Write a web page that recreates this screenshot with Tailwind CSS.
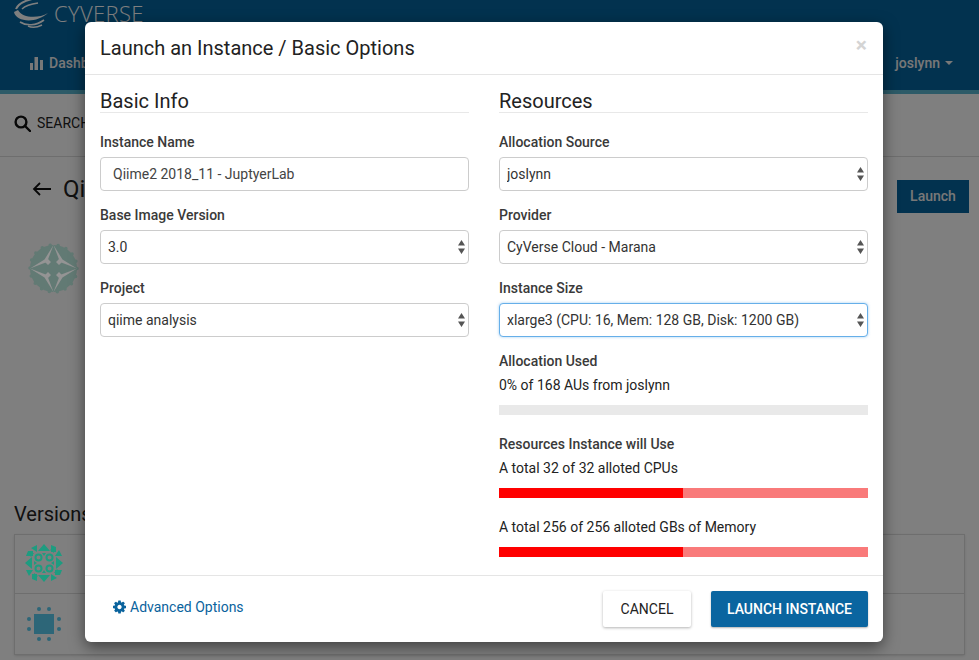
<!DOCTYPE html>
<html lang="en">
<head>
  <meta charset="UTF-8">
  <title>Launch an Instance</title>
  <script src="https://cdn.jsdelivr.net/npm/@tailwindcss/browser@4"></script>
</head>
<body class="relative h-[660px] w-[979px] overflow-hidden bg-white font-['Roboto',sans-serif] text-[14px] text-[#222]">
  <!-- Page behind the modal -->
  <header class="h-[94px] border-b-4 border-[#5bb6d0] bg-[#04649e]">
    <div class="flex h-[29px] items-start pl-[14px]">
      <svg class="h-[29px] w-[34px]" viewBox="0 0 34 29" fill="none" stroke="#fff">
        <path d="M0 12C2 22 22 24 34 13C24 19 8 18 4 10Z" fill="#fff" stroke="none"/>
        <path d="M2 9C4 4 10 1 18 -1" stroke-width="2"/>
        <path d="M8 9C11 6 16 4 24 3" stroke-width="1.500"/>
        <path d="M6 22C12 26 22 26 30 20" stroke-width="1.600"/>
        <path d="M14 26C18 28 24 27 28 25" stroke-width="1.400"/>
      </svg>
      <span class="ml-[6px] mt-[1px] font-['Open_Sans',sans-serif] text-[22px] font-light leading-[24px] tracking-[0.35px] text-white">CYVERSE</span>
    </div>
    <div class="flex h-[61px] items-center justify-between pl-[30px] pr-[26px] pt-[7px] font-medium text-[#f0f0f0]">
      <div class="flex items-center gap-[5px]">
        <svg class="h-[14px] w-[14px]" viewBox="0 0 14 14" fill="currentColor"><rect x="0" y="7" width="3" height="7"/><rect x="4.500" y="1" width="3.500" height="13"/><rect x="10" y="4" width="3" height="10"/></svg>
        <span>Dashboard</span>
      </div>
      <div class="flex items-center gap-[5px]">
        <span>joslynn</span>
        <span class="h-0 w-0 border-x-4 border-t-4 border-x-transparent border-t-[#f0f0f0]"></span>
      </div>
    </div>
  </header>

  <div class="flex h-[63px] items-center gap-[6px] border-b border-[#ddd] pb-[3px] pl-[14px]">
    <svg class="h-[17px] w-[17px]" viewBox="0 0 17 17" fill="none" stroke="#111" stroke-width="2.400"><circle cx="7" cy="7" r="5.400"/><path d="M11 11L16 16" stroke-linecap="round"/></svg>
    <span>SEARCH</span>
  </div>

  <div class="flex h-[57px] items-start justify-between pl-[32px] pr-[10px]">
    <div class="mt-[17px] flex items-center gap-[12px]">
      <svg class="h-[14px] w-[19px]" viewBox="0 0 19 14" fill="none" stroke="#111" stroke-width="1.800"><path d="M19 7H2M8 1L2 7L8 13"/></svg>
      <span class="text-[24px] leading-[30px]">Qiime2</span>
    </div>
    <button class="mt-[23px] flex h-[33px] w-[72px] items-center justify-center bg-[#04649e] font-medium text-[#f0f0f0]">Launch</button>
  </div>

  <div class="ml-[28px] mt-[29px] h-[51px] w-[51px]">
    <svg class="relative z-10 h-[51px] w-[51px]" viewBox="0 0 51 51">
      <circle cx="25.500" cy="25.500" r="23.500" fill="#627a74"/>
      <circle cx="25.500" cy="25.500" r="23.500" fill="none" stroke="#627a74" stroke-width="3.500" stroke-linecap="round" stroke-dasharray="0 8.200"/>
      <g fill="#949494">
        <path d="M25.500 2L19 19L2 25.500L16.500 16.500Z"/>
        <path d="M25.500 2L32 19L49 25.500L34.500 16.500Z"/>
        <path d="M25.500 49L19 32L2 25.500L16.500 34.500Z"/>
        <path d="M25.500 49L32 32L49 25.500L34.500 34.500Z"/>
        <path d="M20 16L23 19L20 22L17 19ZM31 16L34 19L31 22L28 19ZM20 29L23 32L20 35L17 32ZM31 29L34 32L31 35L28 32Z"/>
      </g>
    </svg>
  </div>

  <div class="ml-[14px] mt-[208px] text-[20px] leading-[24px]">Versions</div>
  <div class="mx-[14px] mt-[8px] border border-[#ddd] shadow">
    <div class="flex h-[59px] items-center border-b border-[#ddd] pb-[3px] pl-[9px]">
      <svg class="relative z-10 h-[40px] w-[40px]" viewBox="0 0 40 40" fill="#1e9c80">
        <defs>
          <g id="quarter">
            <path d="M20 1L26 8H14Z"/>
            <path d="M7 5L13 2V9Z"/>
            <path d="M27 2L32 4V9H27Z"/>
            <path d="M18 10H22L20 13Z"/>
            <path d="M4 10L10 10L7 14Z"/>
            <circle cx="14.500" cy="14.500" r="3" fill="none" stroke="#1e9c80" stroke-width="2"/>
          </g>
        </defs>
        <use href="#quarter"/>
        <use href="#quarter" transform="rotate(90 20 20)"/>
        <use href="#quarter" transform="rotate(180 20 20)"/>
        <use href="#quarter" transform="rotate(270 20 20)"/>
      </svg>
    </div>
    <div class="flex h-[60px] items-center pl-[9px]">
      <svg class="relative z-10 h-[40px] w-[40px]" viewBox="0 0 40 40" fill="#2d6678">
        <rect x="10" y="10" width="20" height="20"/>
        <circle cx="15" cy="5" r="2"/><circle cx="25" cy="5" r="2"/><circle cx="15" cy="35" r="2"/><circle cx="25" cy="35" r="2"/><circle cx="5" cy="15" r="2"/><circle cx="5" cy="25" r="2"/><circle cx="35" cy="15" r="2"/><circle cx="35" cy="25" r="2"/>
      </svg>
    </div>
  </div>

  <!-- Modal -->
  <div class="absolute inset-0 bg-black/50">
    <div class="relative z-20 ml-[85px] mt-[22px] flex h-[620px] w-[798px] flex-col rounded-[6px] bg-white shadow-[0_5px_15px_rgba(0,0,0,0.5)]">
      <div class="flex h-[53px] items-center justify-between border-b border-[#e5e5e5] pl-[15px] pr-[16px]">
        <h4 class="text-[20px] leading-[22px]">Launch an Instance / Basic Options</h4>
        <span class="mb-[6px] text-[21px] font-bold leading-none text-[#d4d4d4]">×</span>
      </div>

      <div class="flex flex-1 gap-[30px] pl-[15px] pr-[15px] pt-[15px]">
        <section class="w-[369px]">
          <h3 class="mb-[19px] h-[23px] border-b border-[#e8e8e8] text-[20px] leading-[22px]">Basic Info</h3>
          <label class="mb-[5px] block font-medium leading-[20px] text-[#3a3a3a]">Instance Name</label>
          <input class="mb-[14px] block h-[34px] w-full rounded-[4px] border border-[#ccc] px-[12px] text-[14px] text-[#444]" value="Qiime2 2018_11 - JuptyerLab">

          <label class="mb-[5px] block font-medium leading-[20px] text-[#3a3a3a]">Base Image Version</label>
          <div class="relative mb-[14px]">
            <select class="block h-[34px] w-full appearance-none rounded-[4px] border border-[#ccc] bg-white pl-[7px] text-[14px] text-[#333]"><option>3.0</option></select>
            <svg class="absolute right-[3px] top-[9px] h-[16px] w-[9px]" viewBox="0 0 9 16" fill="#555"><path d="M4.500 1L8 6.500H1ZM4.500 15L1 9.500H8Z"/></svg>
          </div>

          <label class="mb-[5px] block font-medium leading-[20px] text-[#3a3a3a]">Project</label>
          <div class="relative">
            <select class="block h-[34px] w-full appearance-none rounded-[4px] border border-[#ccc] bg-white pl-[7px] text-[14px] text-[#333]"><option>qiime analysis</option></select>
            <svg class="absolute right-[3px] top-[9px] h-[16px] w-[9px]" viewBox="0 0 9 16" fill="#555"><path d="M4.500 1L8 6.500H1ZM4.500 15L1 9.500H8Z"/></svg>
          </div>
        </section>

        <section class="w-[369px]">
          <h3 class="mb-[19px] h-[23px] border-b border-[#e8e8e8] text-[20px] leading-[22px]">Resources</h3>
          <label class="mb-[5px] block font-medium leading-[20px] text-[#3a3a3a]">Allocation Source</label>
          <div class="relative mb-[14px]">
            <select class="block h-[34px] w-full appearance-none rounded-[4px] border border-[#ccc] bg-white pl-[7px] text-[14px] text-[#333]"><option>joslynn</option></select>
            <svg class="absolute right-[3px] top-[9px] h-[16px] w-[9px]" viewBox="0 0 9 16" fill="#555"><path d="M4.500 1L8 6.500H1ZM4.500 15L1 9.500H8Z"/></svg>
          </div>

          <label class="mb-[5px] block font-medium leading-[20px] text-[#3a3a3a]">Provider</label>
          <div class="relative mb-[14px]">
            <select class="block h-[34px] w-full appearance-none rounded-[4px] border border-[#ccc] bg-white pl-[7px] text-[14px] text-[#333]"><option>CyVerse Cloud - Marana</option></select>
            <svg class="absolute right-[3px] top-[9px] h-[16px] w-[9px]" viewBox="0 0 9 16" fill="#555"><path d="M4.500 1L8 6.500H1ZM4.500 15L1 9.500H8Z"/></svg>
          </div>

          <label class="mb-[5px] block font-medium leading-[20px] text-[#3a3a3a]">Instance Size</label>
          <div class="relative mb-[14px]">
            <select class="block h-[34px] w-full appearance-none rounded-[4px] border border-[#66afe9] bg-white pl-[7px] text-[14px] text-[#333] shadow-[0_0_3px_rgba(102,175,233,0.6)]"><option>xlarge3 (CPU: 16, Mem: 128 GB, Disk: 1200 GB)</option></select>
            <svg class="absolute right-[3px] top-[9px] h-[16px] w-[9px]" viewBox="0 0 9 16" fill="#555"><path d="M4.500 1L8 6.500H1ZM4.500 15L1 9.500H8Z"/></svg>
          </div>

          <div class="mb-[4px] font-medium leading-[20px] text-[#3a3a3a]">Allocation Used</div>
          <div class="mb-[10px] leading-[20px]">0% of 168 AUs from joslynn</div>
          <div class="mb-[19px] h-[10px] bg-[#e9e9e9]"></div>

          <div class="mb-[4px] font-medium leading-[20px] text-[#3a3a3a]">Resources Instance will Use</div>
          <div class="mb-[10px] leading-[20px]">A total 32 of 32 alloted CPUs</div>
          <div class="mb-[19px] h-[10px] bg-[#f97a7a]"><div class="h-full w-[184px] bg-[#ff0000]"></div></div>

          <div class="mb-[10px] leading-[20px]">A total 256 of 256 alloted GBs of Memory</div>
          <div class="h-[10px] bg-[#f97a7a]"><div class="h-full w-[184px] bg-[#ff0000]"></div></div>
        </section>
      </div>

      <div class="flex h-[67px] items-center justify-between border-t border-[#e5e5e5] pl-[28px] pr-[15px]">
        <a class="mb-[4px] flex items-center gap-[4px] text-[#0a639d]">
          <svg class="h-[14px] w-[13px]" viewBox="0 0 1536 1536" fill="currentColor"><path d="M1024 768q0-106-75-181t-181-75-181 75-75 181 75 181 181 75 181-75 75-181zm512-109v222q0 12-8 23t-20 13l-185 28q-19 54-39 91 35 50 107 138 10 12 10 25t-9 23q-27 37-99 108t-94 71q-12 0-26-9l-138-108q-44 23-91 38-16 136-29 186-7 28-36 28h-222q-14 0-24.500-8.500t-11.500-21.500l-28-184q-49-16-90-37l-141 107q-10 9-25 9-14 0-25-11-126-114-165-168-7-10-7-23 0-12 8-23 15-21 51-66.500t54-70.500q-27-50-41-99l-183-27q-13-2-21-12.500t-8-23.500v-222q0-12 8-23t19-13l186-28q14-46 39-92-40-57-107-138-10-12-10-24 0-10 9-23 26-36 98.500-107.500t94.500-71.500q13 0 26 10l138 107q44-23 91-38 16-136 29-186 7-28 36-28h222q14 0 24.500 8.500t11.500 21.500l28 184q49 16 90 37l142-107q9-9 24-9 13 0 25 10 129 119 165 170 7 8 7 22 0 12-8 23-15 21-51 66.500t-54 70.500q26 50 41 98l183 28q13 2 21 12.500t8 23.500z"/></svg>
          <span>Advanced Options</span>
        </a>
        <div class="flex items-center gap-[20px]">
          <button class="h-[36px] w-[88px] rounded-[2px] bg-white text-[#222] shadow-[0_1px_3px_rgba(0,0,0,0.3)]">CANCEL</button>
          <button class="h-[36px] w-[157px] rounded-[2px] bg-[#0a65a0] font-medium text-white shadow-[0_1px_2px_rgba(0,0,0,0.3)]">LAUNCH INSTANCE</button>
        </div>
      </div>
    </div>
  </div>
</body>
</html>
